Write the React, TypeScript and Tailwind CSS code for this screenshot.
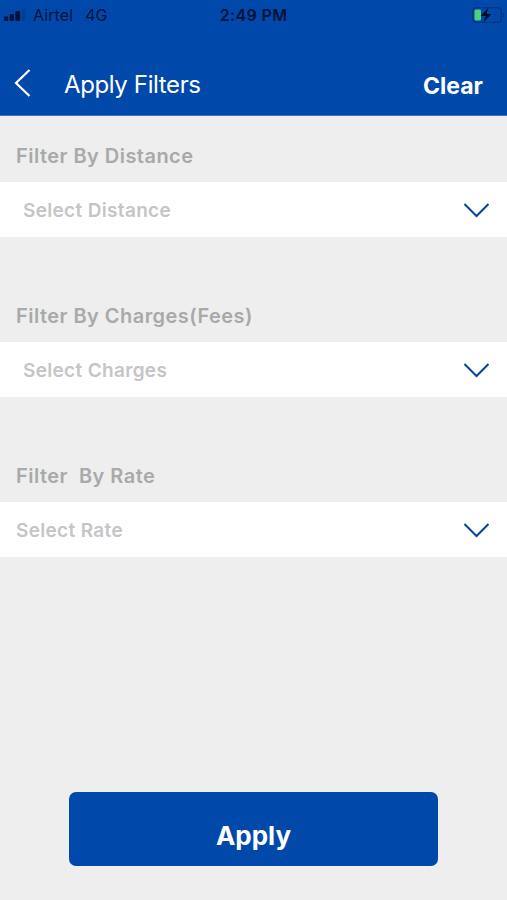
interface FilterSectionProps {
  label: string;
  placeholder: string;
  inputClassName?: string;
}

const SignalIcon = () => (
  <svg aria-hidden="true" width="24" height="14" viewBox="0 0 24 14" fill="#021238">
    <rect x="0" y="8.5" width="4.2" height="4.5" rx="1" />
    <rect x="5.6" y="6" width="4.4" height="7" rx="1" />
    <rect x="11.4" y="3" width="4.8" height="10" rx="1" />
    <rect x="18" y="0.5" width="4" height="12.5" rx="1" opacity="0.2" />
  </svg>
);

const BatteryIcon = () => (
  <svg aria-hidden="true" width="34" height="18" viewBox="0 0 34 18">
    <rect x="0.75" y="1.75" width="28.5" height="14.5" rx="3.5" fill="none" stroke="#03265f" strokeWidth="1.2" opacity="0.7" />
    <path d="M31 6.5c1.6.5 1.6 4.5 0 5z" fill="#03265f" opacity="0.7" />
    <rect x="2.5" y="3.5" width="6.5" height="11" rx="1.5" fill="#4fd07c" />
    <path d="M16.5 1.5 8.6 10h5l-2.4 6.5L19.6 8h-5z" fill="#020d28" />
  </svg>
);

const ChevronDown = () => (
  <svg aria-hidden="true" width="26" height="16" viewBox="0 0 26 16" fill="none">
    <path d="M1.5 2 13.5 14 25.5 2" stroke="#0b4799" strokeWidth="2.1" />
  </svg>
);

const StatusBar = () => (
  <div className="grid h-[29px] grid-cols-3 items-center text-[16px] leading-none text-[#021238]">
    <div className="flex items-center pl-1">
      <SignalIcon />
      <span className="ml-[5px] tracking-[0.1px]">Airtel</span>
      <span className="ml-3">4G</span>
    </div>
    <span className="text-center font-semibold tracking-[0.35px]">2:49 PM</span>
    <div className="flex justify-end pr-px">
      <BatteryIcon />
    </div>
  </div>
);

const Header = () => (
  <header className="h-[116px] border-b border-[#3c73bd] bg-[#0049ab]">
    <StatusBar />
    <div className="flex h-[86px] items-center pt-[24px] pr-6 pl-[14px] text-white">
      <button type="button" aria-label="Back" className="-mt-[2px] mr-[33px]">
        <svg aria-hidden="true" width="17" height="28" viewBox="0 0 17 28" fill="none">
          <path d="M15.5 1 2 14 15.5 27" stroke="currentColor" strokeWidth="2.2" />
        </svg>
      </button>
      <h1 className="mt-[2px] text-[24px] leading-none tracking-[-0.38px]">Apply Filters</h1>
      <button type="button" className="mt-1 ml-auto text-[23px] leading-none font-bold">
        Clear
      </button>
    </div>
  </header>
);

const FilterSection = ({ label, placeholder, inputClassName = "pl-[23px]" }: FilterSectionProps) => (
  <section className="h-40">
    <h2 className="flex h-[66px] items-center pt-[14px] pl-4 text-[20px] leading-none font-semibold tracking-[0.46px] whitespace-pre text-[#a9a9a9]">
      {label}
    </h2>
    <button
      type="button"
      className={`flex h-[55px] w-full items-center justify-between bg-white pr-[18px] text-[19px] leading-none font-semibold tracking-[0.33px] text-[#c5c5c7] ${inputClassName}`}
    >
      <span className="mt-[2px]">{placeholder}</span>
      <ChevronDown />
    </button>
  </section>
);

const App = () => (
  <div className="flex h-[900px] w-full flex-col bg-[#eeeeee] font-['Inter','Liberation_Sans',sans-serif]">
    <Header />
    <main className="flex flex-1 flex-col">
      <FilterSection label="Filter By Distance" placeholder="Select Distance" />
      <FilterSection label="Filter By Charges(Fees)" placeholder="Select Charges" />
      <FilterSection label="Filter  By Rate" placeholder="Select Rate" inputClassName="pl-4" />
      <button
        type="button"
        className="mt-auto mb-[34px] ml-[69px] h-[74px] w-[369px] rounded-[7px] bg-[#0049ab] pt-[14px] text-[26px] leading-none font-bold text-white"
      >
        Apply
      </button>
    </main>
  </div>
);

export default App;
